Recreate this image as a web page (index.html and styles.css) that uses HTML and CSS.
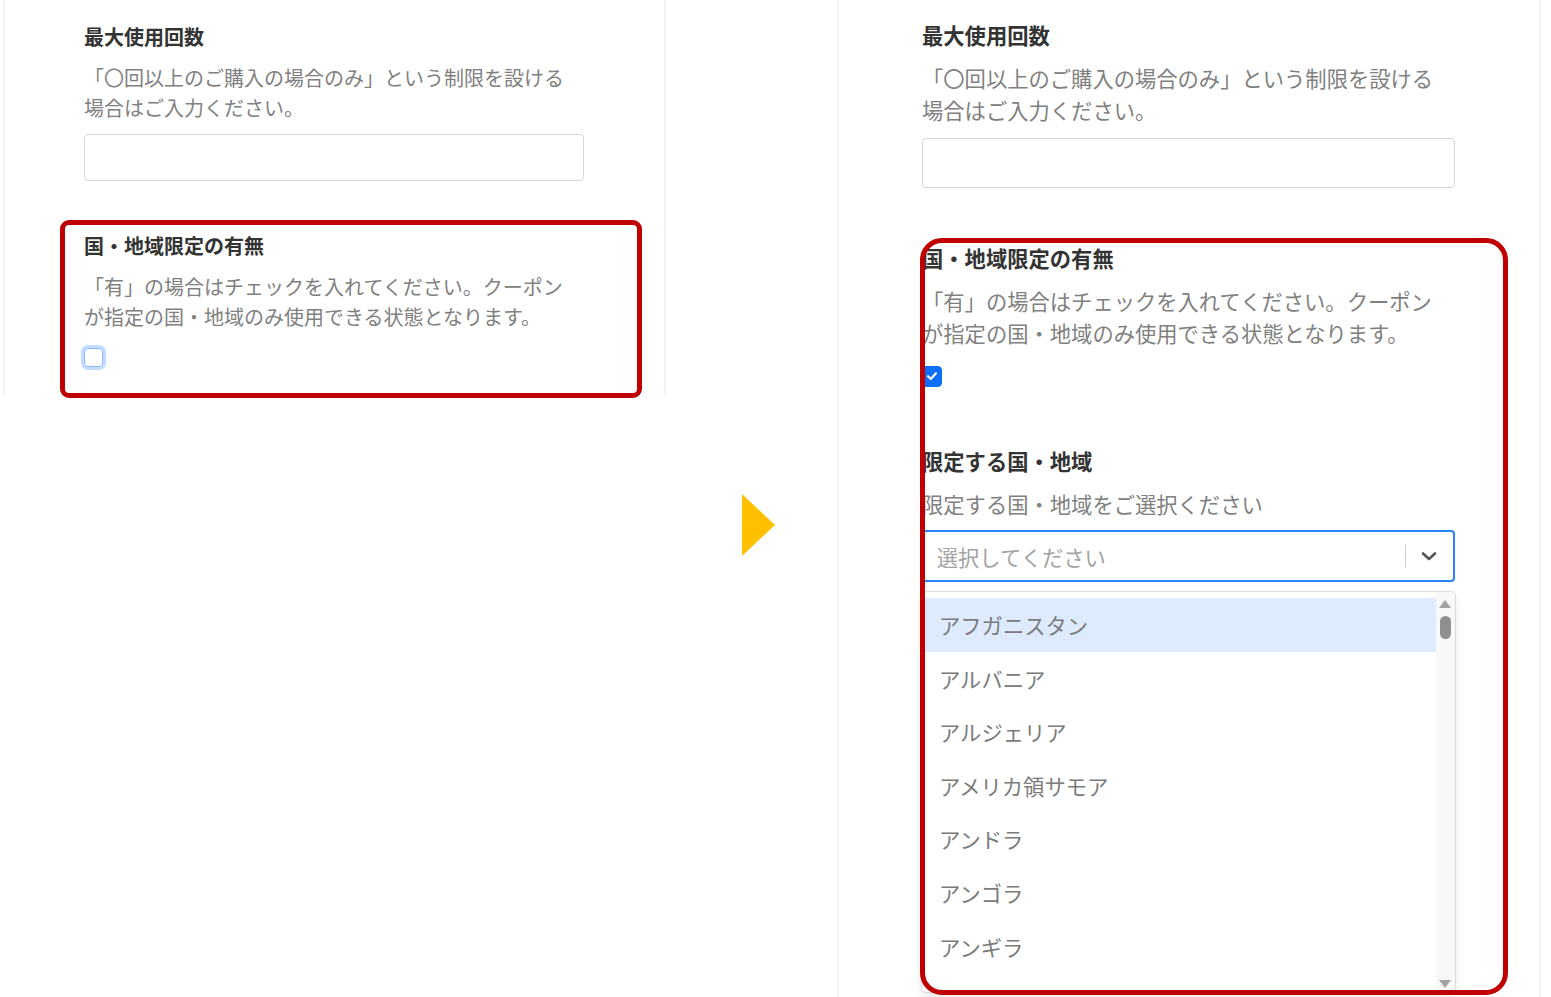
FILE: index.html
```html
<html lang="ja">
<head>
  <meta charset="UTF-8">
  <title>国・地域限定の設定</title>
  <link rel="stylesheet" href="styles.css">
</head>
<body>
  <div class="slide">
    <!-- before: checkbox off -->
    <section class="shot shot-before">
      <div class="field">
        <h3 class="field-title">最大使用回数</h3>
        <p class="field-desc">「〇回以上のご購入の場合のみ」という制限を設ける<br>場合はご入力ください。</p>
        <input class="text-input" type="text">
      </div>
      <div class="field field-next">
        <h3 class="field-title">国・地域限定の有無</h3>
        <p class="field-desc">「有」の場合はチェックを入れてください。クーポン<br>が指定の国・地域のみ使用できる状態となります。</p>
        <span class="check check-focus"></span>
      </div>
      <div class="highlight highlight-before"></div>
    </section>

    <div class="arrow"></div>

    <!-- after: checkbox on, country select open -->
    <section class="shot shot-after">
      <div class="field">
        <h3 class="field-title">最大使用回数</h3>
        <p class="field-desc">「〇回以上のご購入の場合のみ」という制限を設ける<br>場合はご入力ください。</p>
        <input class="text-input" type="text">
      </div>
      <div class="field field-next">
        <h3 class="field-title">国・地域限定の有無</h3>
        <p class="field-desc">「有」の場合はチェックを入れてください。クーポン<br>が指定の国・地域のみ使用できる状態となります。</p>
        <span class="check check-on">
          <svg width="14" height="14" viewBox="0 0 14 14"><polyline points="3,7.2 5.8,10 11,4.2" fill="none" stroke="#fff" stroke-width="2.2" stroke-linecap="round" stroke-linejoin="round"/></svg>
        </span>
      </div>
      <div class="field field-country">
        <h3 class="field-title">限定する国・地域</h3>
        <p class="field-desc">限定する国・地域をご選択ください</p>
        <div class="select">
          <span class="select-placeholder">選択してください</span>
          <span class="select-sep"></span>
          <span class="select-arrow">
            <svg width="18" height="18" viewBox="0 0 18 18"><polyline points="3,6.5 9,12 15,6.5" fill="none" stroke="#555" stroke-width="2.6" stroke-linecap="round" stroke-linejoin="round"/></svg>
          </span>
        </div>
        <div class="menu">
          <ul class="menu-list">
            <li class="menu-option is-focused">アフガニスタン</li>
            <li class="menu-option">アルバニア</li>
            <li class="menu-option">アルジェリア</li>
            <li class="menu-option">アメリカ領サモア</li>
            <li class="menu-option">アンドラ</li>
            <li class="menu-option">アンゴラ</li>
            <li class="menu-option">アンギラ</li>
          </ul>
          <div class="scrollbar">
            <span class="sb-up"></span>
            <span class="sb-thumb"></span>
            <span class="sb-down"></span>
          </div>
        </div>
      </div>
      <div class="highlight highlight-after"></div>
    </section>
  </div>
</body>
</html>
```

FILE: styles.css
```css
body {
  margin: 0;
  background: white;
  font-family: 'Noto Sans CJK JP', 'Noto Sans', sans-serif;
  overflow: hidden;
}

.slide {
  display: flex;
  align-items: flex-start;
  width: 1551px;
  height: 997px;
  overflow: hidden;
}

.shot {
  position: relative;
  box-sizing: border-box;
  border-left: 2px solid #f4f4f4;
  border-right: 2px solid #f4f4f4;
  background: white;
}

.shot-before {
  font-size: 20px;
  width: 663px;
  height: 395px;
  margin-left: 3px;
  padding: 22px 0 0 79px;
}

.shot-after {
  font-size: 21.3px;
  width: 704px;
  height: 997px;
  margin-left: 62px;
  padding: 19px 0 0 83px;
}

.field-title {
  margin: 0;
  font-size: 1em;
  font-weight: bold;
  line-height: 1.5;
  color: #333;
}

.field-desc {
  margin: 0.53em 0 0;
  line-height: 1.5;
  color: #808080;
}

.field-next {
  margin-top: 2.5em;
}

.field-country {
  margin-top: 2.74em;
}

.text-input {
  display: block;
  box-sizing: border-box;
  font: inherit;
  width: 25em;
  height: 2.37em;
  margin-top: 0.55em;
  border: 1px solid #d3d6da;
  border-radius: 4px;
  background: white;
}

.check {
  display: flex;
  align-items: center;
  justify-content: center;
  box-sizing: border-box;
  width: 0.95em;
  height: 0.95em;
  margin-top: 0.83em;
  border-radius: 0.2em;
}

.check-focus {
  border: 1px solid #86b7fe;
  box-shadow: 0 0 0 3px rgba(13, 110, 253, 0.25);
}

.check-on {
  background: #0d6efd;
}

.select {
  display: flex;
  align-items: center;
  box-sizing: border-box;
  width: 25em;
  height: 2.44em;
  margin-top: 0.47em;
  border: 2px solid #2684ff;
  border-radius: 4px;
}

.select-placeholder {
  flex: 1;
  padding-left: 0.6em;
  color: #a3a3a3;
}

.select-sep {
  align-self: stretch;
  width: 1px;
  margin: 0.6em 0;
  background: #cccccc;
}

.select-arrow {
  display: flex;
  justify-content: center;
  width: 47px;
}

.menu {
  display: flex;
  width: 25em;
  height: 400px;
  margin-top: 10px;
  border-radius: 4px;
  background: white;
  box-shadow: 0 0 0 1px rgba(0, 0, 0, 0.1), 0 4px 11px rgba(0, 0, 0, 0.1);
  overflow: hidden;
}

.menu-list {
  flex: 1;
  list-style: none;
  margin: 0;
  padding: 6px 0 0;
  overflow: hidden;
}

.menu-option {
  height: 53.6px;
  line-height: 53.6px;
  padding-left: 17px;
  color: #7b7b7b;
  white-space: nowrap;
}

.menu-option.is-focused {
  background: #deebff;
}

.scrollbar {
  display: flex;
  flex-direction: column;
  align-items: center;
  width: 19px;
  padding: 8px 0 4px;
  box-sizing: border-box;
  background: #f8f8f8;
}

.sb-up,
.sb-down {
  width: 0;
  height: 0;
  border-left: 6px solid transparent;
  border-right: 6px solid transparent;
}

.sb-up {
  border-bottom: 8px solid #a3a3a3;
}

.sb-down {
  margin-top: auto;
  border-top: 8px solid #a3a3a3;
}

.sb-thumb {
  width: 11px;
  height: 23px;
  margin-top: 8px;
  border-radius: 6px;
  background: #8f8f8f;
}

.highlight {
  position: absolute;
  box-sizing: border-box;
  border: 5px solid #c00000;
  z-index: 2;
}

.highlight-before {
  left: 55px;
  top: 220px;
  width: 582px;
  height: 178px;
  border-radius: 9px;
}

.highlight-after {
  left: 81px;
  top: 238px;
  width: 588px;
  height: 757px;
  border-radius: 22px;
}

.arrow {
  width: 0;
  height: 0;
  margin: 494px 0 0 76px;
  border-left: 33px solid #ffc000;
  border-top: 31.5px solid transparent;
  border-bottom: 31.5px solid transparent;
}
```
